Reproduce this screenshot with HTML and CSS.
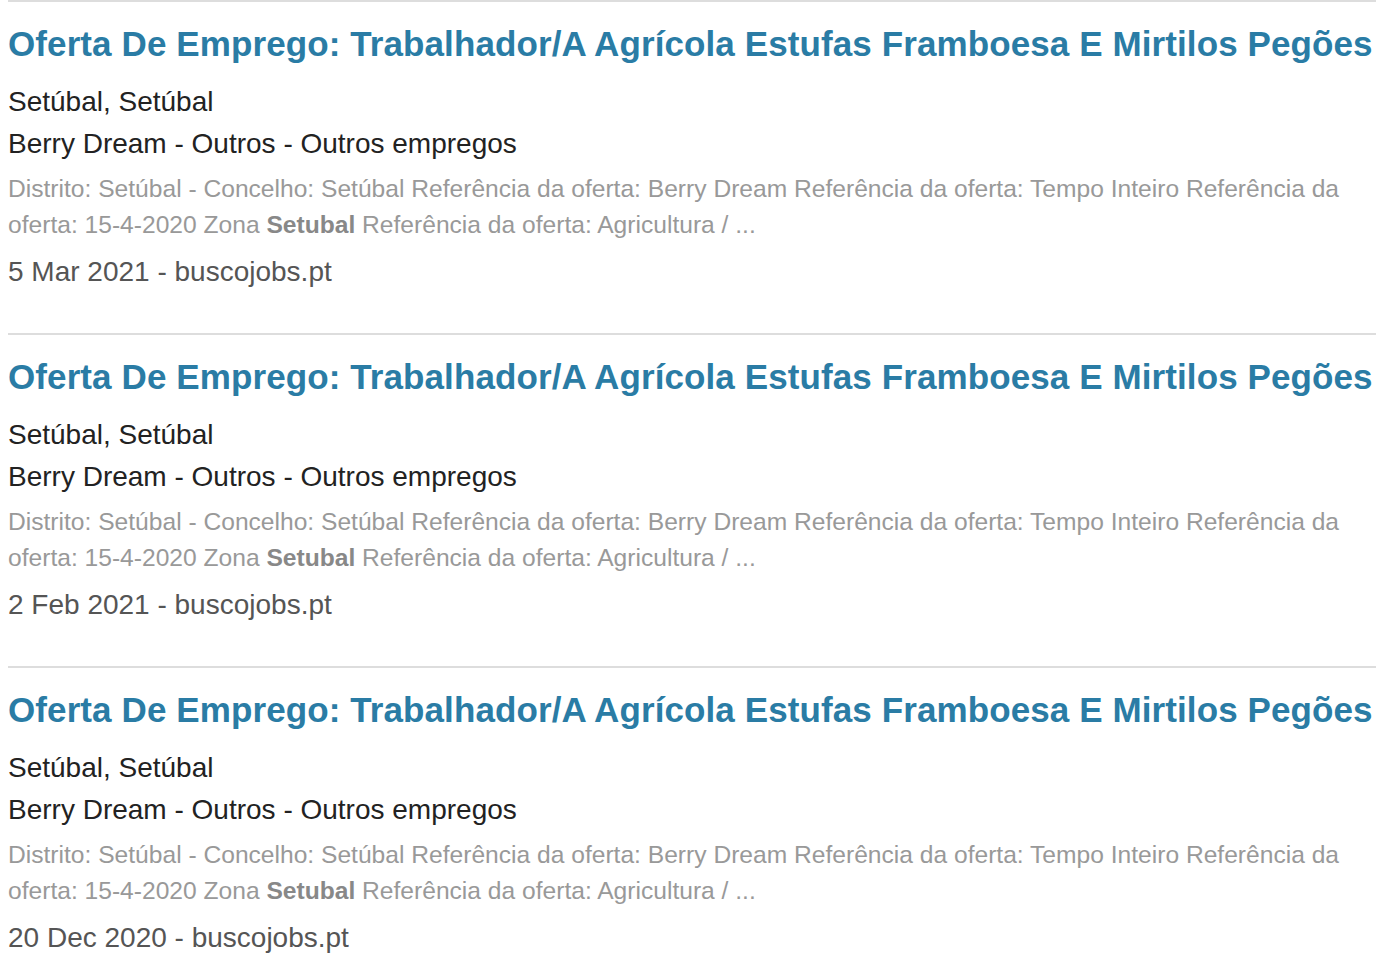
FILE: index.html
```html
<!DOCTYPE html>
<html lang="pt">
<head>
<meta charset="utf-8">
<title>Ofertas</title>
<link rel="stylesheet" href="styles.css">
</head>
<body>
<div class="results">
  <div class="job">
    <a class="job-title" href="#">Oferta De Emprego: Trabalhador/A Agrícola Estufas Framboesa E Mirtilos Pegões</a>
    <div class="job-location">Setúbal, Setúbal</div>
    <div class="job-company">Berry Dream - Outros - Outros empregos</div>
    <div class="job-desc">Distrito: Setúbal - Concelho: Setúbal Referência da oferta: Berry Dream Referência da oferta: Tempo Inteiro Referência da oferta: 15-4-2020 Zona <b>Setubal</b> Referência da oferta: Agricultura / ...</div>
    <div class="job-meta">5 Mar 2021 - buscojobs.pt</div>
  </div>
  <div class="job">
    <a class="job-title" href="#">Oferta De Emprego: Trabalhador/A Agrícola Estufas Framboesa E Mirtilos Pegões</a>
    <div class="job-location">Setúbal, Setúbal</div>
    <div class="job-company">Berry Dream - Outros - Outros empregos</div>
    <div class="job-desc">Distrito: Setúbal - Concelho: Setúbal Referência da oferta: Berry Dream Referência da oferta: Tempo Inteiro Referência da oferta: 15-4-2020 Zona <b>Setubal</b> Referência da oferta: Agricultura / ...</div>
    <div class="job-meta">2 Feb 2021 - buscojobs.pt</div>
  </div>
  <div class="job">
    <a class="job-title" href="#">Oferta De Emprego: Trabalhador/A Agrícola Estufas Framboesa E Mirtilos Pegões</a>
    <div class="job-location">Setúbal, Setúbal</div>
    <div class="job-company">Berry Dream - Outros - Outros empregos</div>
    <div class="job-desc">Distrito: Setúbal - Concelho: Setúbal Referência da oferta: Berry Dream Referência da oferta: Tempo Inteiro Referência da oferta: 15-4-2020 Zona <b>Setubal</b> Referência da oferta: Agricultura / ...</div>
    <div class="job-meta">20 Dec 2020 - buscojobs.pt</div>
  </div>
</div>
</body>
</html>
```

FILE: styles.css
```css
html, body {
  margin: 0;
  padding: 0;
  background: #fff;
}
body {
  font-family: "Liberation Sans", Arial, Helvetica, sans-serif;
  color: #222;
}
.results {
  margin-left: 8px;
  width: 1368px;
}
.job {
  border-top: 2px solid #dddddd;
  padding: 20px 0 40px;
  display: flex;
  flex-direction: column;
}
.job-title {
  font-size: 35px;
  line-height: 44px;
  font-weight: bold;
  letter-spacing: 0.1px;
  color: #2a7ca5;
  text-decoration: none;
  white-space: nowrap;
}
.job-location {
  margin-top: 15px;
  font-size: 28px;
  line-height: 42px;
  color: #222;
}
.job-company {
  font-size: 28px;
  line-height: 42px;
  color: #222;
}
.job-desc {
  margin-top: 6px;
  font-size: 24.6px;
  line-height: 36px;
  color: #999;
  padding-right: 10px;
}
.job-desc b {
  color: #888;
}
.job-meta {
  margin-top: 8px;
  font-size: 28px;
  line-height: 42px;
  color: #555;
}
```
